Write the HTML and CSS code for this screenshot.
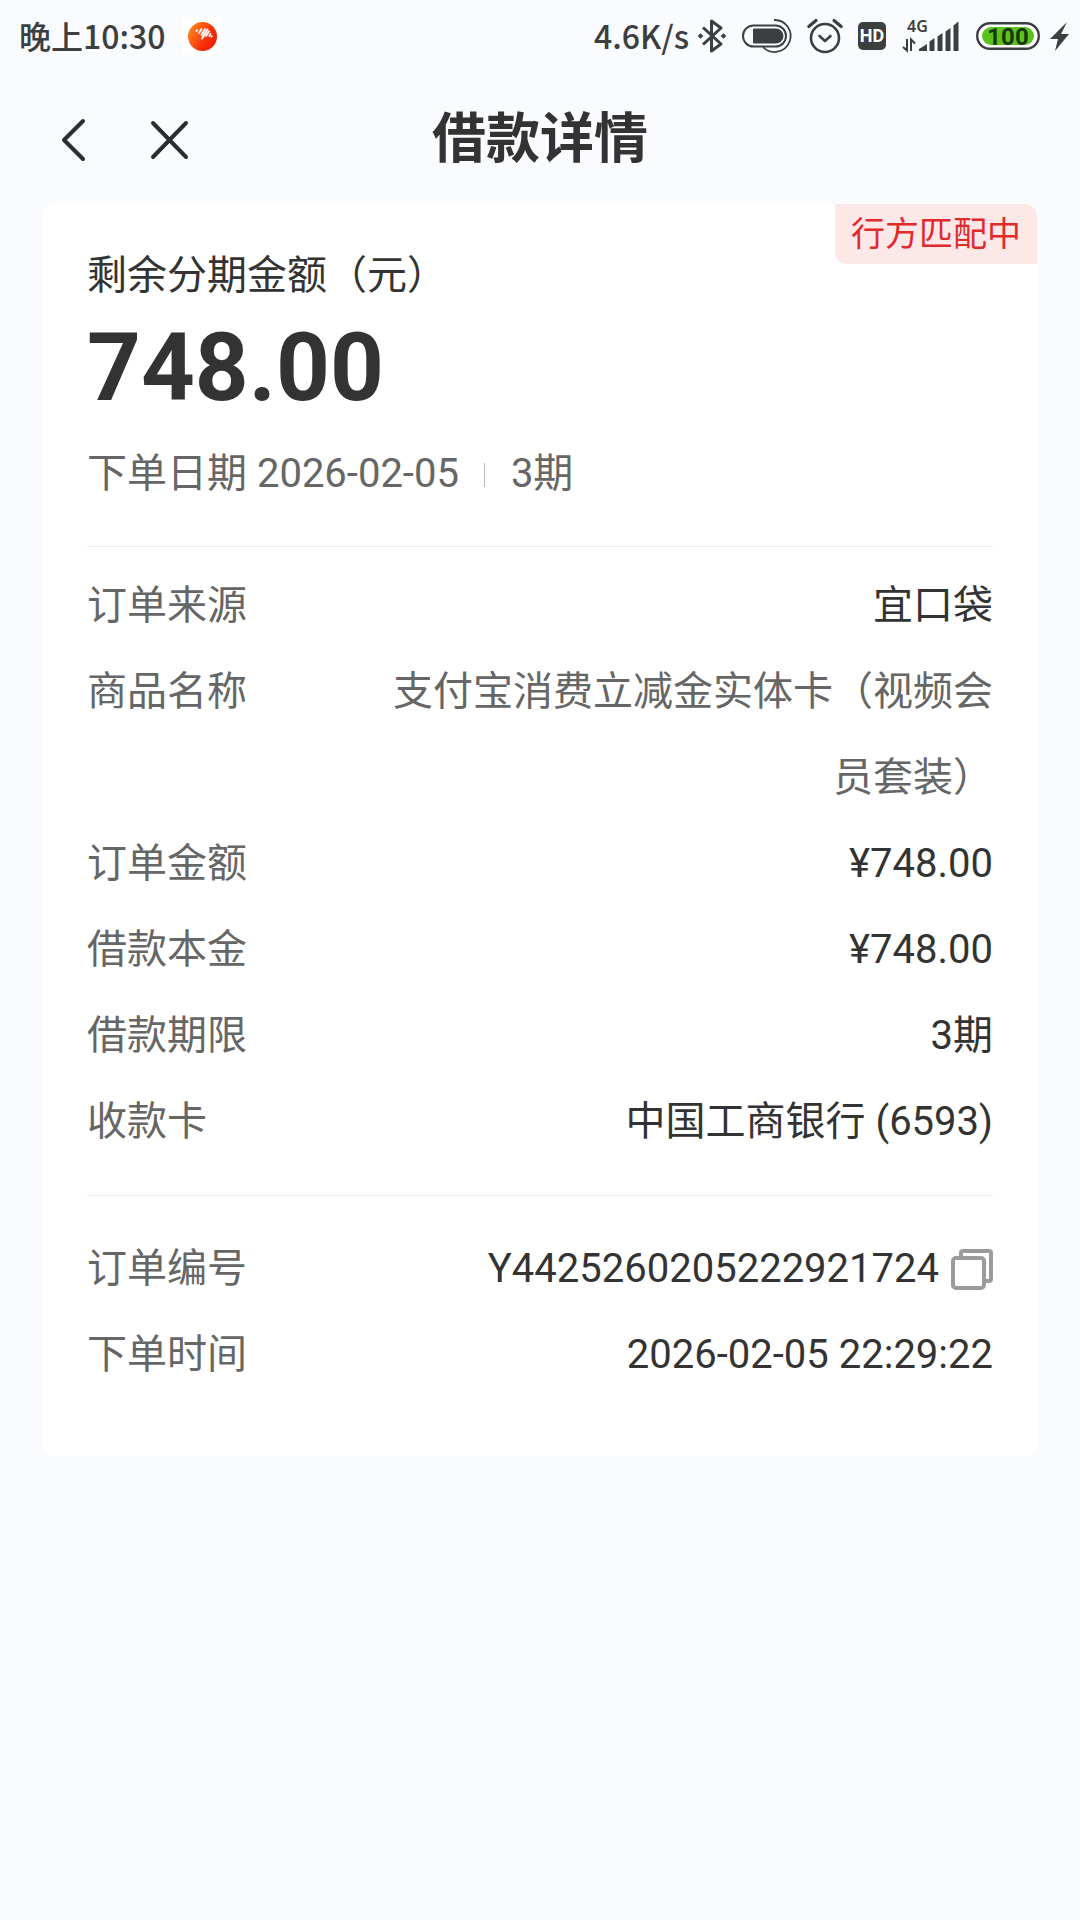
FILE: index.html
```html
<!DOCTYPE html>
<html lang="zh-CN">
<head>
    <meta charset="UTF-8">
    <meta name="viewport" content="width=device-width, initial-scale=1.0">
    <title>借款详情</title>
    <link rel="stylesheet" href="styles.css">
</head>
<body>
    <div class="status-bar">
        <div class="status-left">
            <span class="status-text">晚上10:30</span>
            <svg class="app-icon" width="39" height="38" viewBox="0 0 39 38" aria-hidden="true">
                <defs>
                    <linearGradient id="ball" x1="0" y1="0.2" x2="1" y2="0.8">
                        <stop offset="0" stop-color="#ff8a1c"/>
                        <stop offset="0.6" stop-color="#f8330c"/>
                        <stop offset="1" stop-color="#ee1a06"/>
                    </linearGradient>
                </defs>
                <rect width="39" height="38" fill="#fff"/>
                <circle cx="20.500" cy="19.500" r="14.500" fill="url(#ball)"/>
                <g stroke="#fff" stroke-width="1.900" stroke-linecap="round" fill="none">
                    <path d="M14.500 14l.5-.8M17 16l2.500-4M19.500 18l3.500-6M20 21.500l5.500-9M24 19l3-4.500M27.300 19l1.200-2M29.500 19.500l.2-.3"/>
                </g>
            </svg>
        </div>
        <div class="status-right">
            <div class="network">
                <span class="status-text">4.6K/s</span>
                <svg width="30" height="36" viewBox="0 0 30 36" fill="none" stroke="#3c3e40" stroke-width="3" aria-hidden="true">
                    <path d="M6 9.500L24 26L14.500 33V3L24 10L6 26.500" stroke-linejoin="round"/>
                    <path d="M3.500 15.200l2.800 2.800-2.800 2.800L.7 18zM26.500 15.200l2.800 2.800-2.800 2.800-2.800-2.800z" fill="#3c3e40" stroke="none"/>
                </svg>
            </div>
            <svg width="50" height="36" viewBox="0 0 50 36" fill="none" stroke="#3c3e40" aria-hidden="true">
                <rect x="1" y="7.500" width="43" height="21" rx="10.500" stroke-width="2"/>
                <path d="M12 10.500h22a7.500 7.500 0 0 1 0 15H12a1 1 0 0 1-1-1v-13a1 1 0 0 1 1-1z" fill="#3c3e40" stroke="none"/>
                <path d="M32 2a16 16 0 1 1-11 27" stroke-width="1.800"/>
            </svg>
            <svg width="36" height="36" viewBox="0 0 36 36" fill="none" stroke="#3c3e40" stroke-width="2.600" stroke-linecap="round" stroke-linejoin="round" aria-hidden="true">
                <circle cx="18" cy="20" r="14"/>
                <path d="M12.500 18l5.500 5 5.500-5"/>
                <path d="M1.800 8.500L9 2.500M34.200 8.500L27 2.500" stroke-width="3.200"/>
            </svg>
            <span class="hd">HD</span>
            <svg class="signal" width="60" height="36" viewBox="0 0 60 36" fill="#3c3e40" aria-hidden="true">
                <text x="6" y="14">4G</text>
                <path d="M18 33v-2l8-5v7zM28.500 33V23.500l5-3.500v13zM36.500 33V18.500l5-3.500v18zM44.500 33V13.500l5-3.500v23zM52.500 33V7.500l5-4V33z"/>
                <path d="M6 21V32.500L2 29M10 33V21.500l4 4" fill="none" stroke="#3c3e40" stroke-width="2"/>
            </svg>
            <svg class="battery" width="64" height="30" viewBox="0 0 64 30" aria-label="100%">
                <rect x="1.200" y="2.200" width="61.600" height="25.600" rx="12.800" fill="#fff" stroke="#3c3e40" stroke-width="2.400"/>
                <rect x="6" y="6" width="52" height="18" rx="9" fill="#5cc31c"/>
                <text x="32" y="24" text-anchor="middle">100</text>
            </svg>
            <svg class="bolt" width="20" height="32" viewBox="0 0 20 32" fill="#3c3e40" aria-hidden="true">
                <path d="M17 2L0 19h8L5 31 19 14h-8z"/>
            </svg>
        </div>
    </div>

    <header class="nav">
        <div class="nav-buttons">
            <button type="button" aria-label="返回">
                <svg width="40" height="44" viewBox="0 0 40 44"><path d="M30 3L11 22l19 19"/></svg>
            </button>
            <button type="button" aria-label="关闭">
                <svg width="40" height="44" viewBox="0 0 40 44"><path d="M4 5l33 34M37 5L4 39"/></svg>
            </button>
        </div>
        <h1>借款详情</h1>
    </header>

    <main class="card">
        <span class="badge">行方匹配中</span>

        <section class="summary">
            <p class="summary-label">剩余分期金额（元）</p>
            <p class="amount">748.00</p>
            <p class="summary-meta">
                <span>下单日期 2026-02-05</span>
                <span class="term">3期</span>
            </p>
        </section>

        <dl class="details">
            <div class="row"><dt>订单来源</dt><dd>宜口袋</dd></div>
            <div class="row"><dt>商品名称</dt><dd class="muted">支付宝消费立减金实体卡（视频会员套装）</dd></div>
            <div class="row"><dt>订单金额</dt><dd>¥748.00</dd></div>
            <div class="row"><dt>借款本金</dt><dd>¥748.00</dd></div>
            <div class="row"><dt>借款期限</dt><dd>3期</dd></div>
            <div class="row"><dt>收款卡</dt><dd>中国工商银行 (6593)</dd></div>
        </dl>

        <dl class="details order">
            <div class="row">
                <dt>订单编号</dt>
                <dd class="order-no">
                    <span>Y4425260205222921724</span>
                    <button type="button" aria-label="复制订单编号">
                        <svg width="42" height="42" viewBox="0 0 42 42" fill="none" stroke="#9b9b9b" stroke-width="4" stroke-linejoin="round">
                            <path d="M10 9V5a2 2 0 0 1 2-2h26a2 2 0 0 1 2 2v26a2 2 0 0 1-2 2h-5"/>
                            <rect x="2" y="10" width="31" height="30" rx="3"/>
                        </svg>
                    </button>
                </dd>
            </div>
            <div class="row"><dt>下单时间</dt><dd>2026-02-05 22:29:22</dd></div>
        </dl>
    </main>
</body>
</html>
```
FILE: styles.css
```css
* {
    box-sizing: border-box;
}

body {
    margin: 0;
    min-height: 100vh;
    background: #fafbff;
    color: #333;
    font-family: Roboto, "Noto Sans CJK SC", sans-serif;
    font-size: 40px;
}

h1, p, dl, dd {
    margin: 0;
}

button {
    display: flex;
    padding: 0;
    border: none;
    background: none;
    cursor: pointer;
}

/* 系统状态栏 */
.status-bar {
    display: flex;
    align-items: center;
    justify-content: space-between;
    height: 72px;
    padding: 0 10px 0 19px;
    color: #3c3e40;
    font-family: "Noto Sans CJK SC", sans-serif;
    font-size: 32px;
    font-weight: 500;
    line-height: 40px;
}

.status-bar svg {
    overflow: visible;
}

.status-left,
.status-right,
.network {
    display: flex;
    align-items: center;
}

.status-left {
    gap: 16px;
}

.status-right {
    gap: 15px;
}

.network {
    gap: 8px;
}

.status-text {
    padding-bottom: 2px;
}

.hd {
    width: 28px;
    height: 28px;
    border-radius: 5px;
    background: #3c3e40;
    color: #fff;
    font-family: Roboto, sans-serif;
    font-size: 18px;
    font-weight: 700;
    line-height: 28px;
    text-align: center;
}

.signal text {
    font-family: "Noto Sans", sans-serif;
    font-size: 16px;
    font-weight: 600;
}

.battery text {
    fill: #16380a;
    font-family: Roboto, sans-serif;
    font-size: 24px;
    font-weight: 700;
}

.bolt {
    margin-left: -5px;
}

/* 导航栏 */
.nav {
    display: grid;
    grid-template-columns: 1fr auto 1fr;
    align-items: center;
    height: 132px;
    padding: 4px 43px 0;
}

.nav-buttons {
    display: flex;
    gap: 56px;
    padding-left: 10px;
}

.nav-buttons svg {
    fill: none;
    stroke: #2b2d2e;
    stroke-width: 4;
    stroke-linecap: round;
    stroke-linejoin: round;
}

.nav h1 {
    font-size: 54px;
    font-weight: 700;
    line-height: 80px;
}

/* 详情卡片 */
.card {
    position: relative;
    margin: 0 43px;
    padding: 0 44px 58px;
    border-radius: 12px;
    background: #fff;
}

.badge {
    position: absolute;
    top: 0;
    right: 0;
    padding: 0 16px;
    border-radius: 0 12px 0 12px;
    background: #fde8e8;
    color: #e02a2e;
    font-size: 34px;
    line-height: 60px;
}

.summary {
    padding: 42px 0 36px;
    border-bottom: 1px solid #eaeaea;
}

.summary-label {
    line-height: 60px;
}

.amount {
    margin-bottom: 8px;
    font-size: 94px;
    font-weight: 700;
    line-height: 124px;
}

.summary-meta {
    display: flex;
    align-items: center;
    color: #666;
    line-height: 72px;
}

.term::before {
    content: "";
    display: inline-block;
    width: 1px;
    height: 24px;
    margin: 0 26px 0 25px;
    background: #bbb;
}

.details {
    padding: 16px 0 30px;
}

.row {
    display: flex;
    justify-content: space-between;
    line-height: 86px;
}

.row dt {
    flex: none;
    width: 280px;
    color: #666;
}

.row dd {
    text-align: right;
}

.row .muted {
    color: #666;
}

.order {
    padding: 30px 0 0;
    border-top: 1px solid #eaeaea;
}

.order-no {
    display: flex;
    align-items: center;
    gap: 12px;
}
```
